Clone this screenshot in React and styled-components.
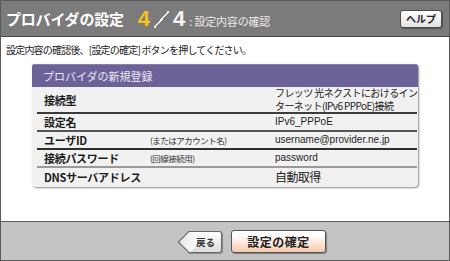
import React from "react";
import styled, { createGlobalStyle } from "styled-components";

const GlobalStyle = createGlobalStyle`
  body {
    margin: 0;
    font-family: "Noto Sans CJK JP", "Noto Sans", sans-serif;
    color: #222;
  }
`;

const Frame = styled.div`
  width: 450px;
  height: 261px;
  box-sizing: border-box;
  border: 1px solid #5a5a5a;
  display: flex;
  flex-direction: column;
  overflow: hidden;
`;

const Header = styled.div`
  height: 35px;
  flex: none;
  background: #7b7b7b;
  border-bottom: 1px solid #4a4a4a;
  display: flex;
  align-items: center;
  padding: 0 7px 0 5px;
`;

const Title = styled.h1`
  margin: 0;
  font-size: 15px;
  font-weight: 700;
  letter-spacing: -0.2px;
  color: #fff;
`;

const Step = styled.span`
  margin-left: 14px;
  font-family: "Liberation Sans", "Noto Sans", sans-serif;
  font-size: 22px;
  font-weight: 700;
  color: ${(props) => (props.current ? "#f6c21c" : "#f4f4f4")};
`;

const Slash = styled.span`
  display: inline-block;
  width: 15px;
  height: 17px;
  margin: 1px 4px 0;
  background: linear-gradient(
    to bottom right,
    transparent calc(50% - 0.8px),
    #f4f4f4 calc(50% - 0.8px),
    #f4f4f4 calc(50% + 0.8px),
    transparent calc(50% + 0.8px)
  );
`;

const StepTotal = styled(Step)`
  margin-left: 0;
`;

const SubTitle = styled.span`
  margin-left: 4px;
  margin-top: 4px;
  font-size: 11px;
  letter-spacing: -0.2px;
  color: #eaeaea;
`;

const HelpButton = styled.button`
  margin-left: auto;
  width: 42px;
  height: 18px;
  padding: 0;
  border: 1px solid #4c4c4c;
  border-radius: 3px;
  background: linear-gradient(#ffffff, #e2e2e2);
  box-shadow: 1px 1px 1px rgba(0, 0, 0, 0.35);
  font-family: inherit;
  font-size: 10px;
  font-weight: 700;
  color: #222;
`;

const Body = styled.div`
  flex: 1;
  background: #fff;
  padding: 6px 0 0 5px;
`;

const Instruction = styled.p`
  margin: 0;
  font-size: 10px;
  letter-spacing: -0.8px;
  line-height: 14px;
`;

const Panel = styled.div`
  width: 386px;
  margin: 7px 0 0 26px;
  background: #f1f1f1;
  border-radius: 3px 3px 4px 4px;
  box-shadow: 1px 1px 2px rgba(0, 0, 0, 0.45);
  overflow: hidden;
`;

const PanelHeader = styled.div`
  height: 23px;
  background: #6d6298;
  border-top: 1px solid #8a80b0;
  box-sizing: border-box;
  display: flex;
  align-items: center;
  padding-left: 11px;
  font-size: 11px;
  color: #ece8f6;
`;

const Rows = styled.div`
  padding: 0 1px 1px 5px;
`;

const Row = styled.div`
  display: grid;
  grid-template-columns: 106px 125px 1fr;
  align-items: center;
  min-height: ${(props) => props.h}px;
  padding-left: 7px;
  border-bottom: ${(props) => (props.line ? `2px solid ${props.line}` : "none")};
`;

const Label = styled.div`
  font-size: 11px;
  font-weight: 700;
  color: #1c1c1c;
  letter-spacing: -0.3px;
`;

const Note = styled.div`
  font-size: 8.5px;
  letter-spacing: -0.5px;
  color: #333;
`;

const Value = styled.div`
  font-family: ${(props) =>
    props.latin ? `"Liberation Sans", sans-serif` : "inherit"};
  font-size: ${(props) => props.size || 10}px;
  letter-spacing: ${(props) => (props.latin ? "0" : "-0.6px")};
  line-height: 12.5px;
  white-space: pre;
  color: #222;
`;

const Footer = styled.div`
  height: 37px;
  flex: none;
  background: #c4c4c4;
  border-top: 1px solid #5e5e5e;
  display: flex;
  align-items: center;
  justify-content: center;
  gap: 9px;
  padding: 1px 0 0 56px;
`;

const BackButton = styled.button`
  position: relative;
  margin-left: 8px;
  width: 34px;
  height: 22px;
  padding: 0 0 0 2px;
  border: 1px solid #666;
  border-left: none;
  border-radius: 0 3px 3px 0;
  background: linear-gradient(#ffffff, #dcdcdc);
  box-shadow: 1px 1px 1px rgba(0, 0, 0, 0.3);
  font-family: inherit;
  font-size: 9.5px;
  font-weight: 700;
  color: #333;

  &::before {
    content: "";
    position: absolute;
    left: -7px;
    top: 2px;
    width: 15px;
    height: 15px;
    border-left: 1px solid #666;
    border-bottom: 1px solid #666;
    background: linear-gradient(45deg, #e8e8e8, #fff);
    transform: rotate(45deg);
  }

  span {
    position: relative;
  }
`;

const ConfirmButton = styled.button`
  width: 95px;
  height: 23px;
  padding: 0;
  border: 1px solid #555;
  border-radius: 3px;
  background: linear-gradient(#ffffff 20%, #f7c9ad);
  box-shadow: 1px 1px 1px rgba(0, 0, 0, 0.35);
  font-family: inherit;
  font-size: 12px;
  font-weight: 700;
  letter-spacing: 0.5px;
  color: #222;
`;

const rows = [
  {
    label: "接続型",
    value: "フレッツ 光ネクストにおけるイン\nターネット(IPv6 PPPoE)接続",
    h: 24,
    line: "#3c3c3c",
  },
  { label: "設定名", value: "IPv6_PPPoE", latin: true, h: 16, line: "#555" },
  {
    label: "ユーザID",
    note: "(またはアカウント名)",
    value: "username@provider.ne.jp",
    latin: true,
    h: 16,
    line: "#2e2e2e",
  },
  {
    label: "接続パスワード",
    note: "(回線接続用)",
    value: "password",
    latin: true,
    h: 16,
    line: "#9a9a9a",
  },
  { label: "DNSサーバアドレス", value: "自動取得", size: 12, h: 18 },
];

export default function App() {
  return (
    <>
      <GlobalStyle />
      <Frame>
        <Header>
          <Title>プロバイダの設定</Title>
          <Step current>4</Step>
          <Slash />
          <StepTotal>4</StepTotal>
          <SubTitle>: 設定内容の確認</SubTitle>
          <HelpButton>ヘルプ</HelpButton>
        </Header>
        <Body>
          <Instruction>
            設定内容の確認後、[設定の確定] ボタンを押してください。
          </Instruction>
          <Panel>
            <PanelHeader>プロバイダの新規登録</PanelHeader>
            <Rows>
              {rows.map((r) => (
                <Row key={r.label} h={r.h} line={r.line}>
                  <Label>{r.label}</Label>
                  <Note>{r.note}</Note>
                  <Value latin={r.latin} size={r.size}>
                    {r.value}
                  </Value>
                </Row>
              ))}
            </Rows>
          </Panel>
        </Body>
        <Footer>
          <BackButton>
            <span>戻る</span>
          </BackButton>
          <ConfirmButton>設定の確定</ConfirmButton>
        </Footer>
      </Frame>
    </>
  );
}
